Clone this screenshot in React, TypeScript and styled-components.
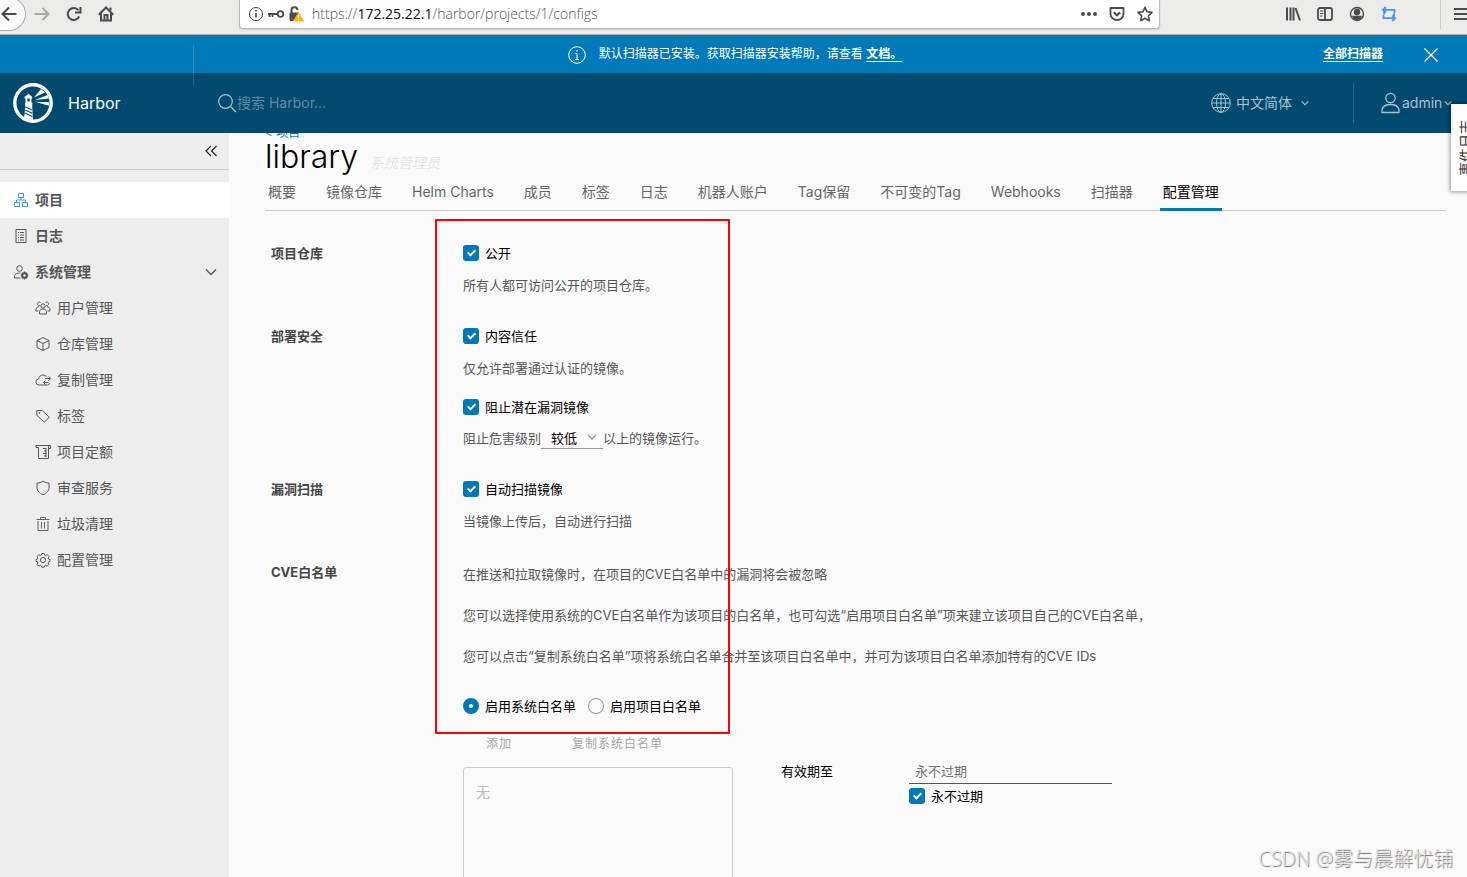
import React from 'react';
import styled, { createGlobalStyle } from 'styled-components';

const uiFont = `Inter, "Noto Sans CJK SC", sans-serif`;
const chromeFont = `"Open Sans", "Noto Sans CJK SC", sans-serif`;

const GlobalStyle = createGlobalStyle`
  *, *::before, *::after { box-sizing: border-box; }
  body { margin: 0; font-family: ${uiFont}; font-size: 13px; font-weight: 400; line-height: 24px; color: #000; background: #fafafa; }
  button, input, select, textarea { font: inherit; color: inherit; margin: 0; }
  button { border: 0; padding: 0; background: none; cursor: pointer; }
  p, h1, ul { margin: 0; padding: 0; font-weight: inherit; }
  ul { list-style: none; }
  svg { display: block; flex: none; }
`;

/* ---------- window ---------- */
const Window = styled.div`
  position: relative;
  display: flex;
  flex-direction: column;
  height: 100vh;
  overflow: hidden;
`;

const Toolbar = styled.div`
  display: flex;
  align-items: flex-start;
  height: 35px;
  flex: none;
  background: #ebebea;
  border-bottom: 1px solid #b4b4b3;
  color: #4a4a4f;
`;

const NavButtons = styled.div`
  display: flex;
  align-items: center;
  gap: 16px;
  width: 239px;
  height: 28px;
`;

const BackButton = styled.button`
  display: flex;
  align-items: center;
  justify-content: flex-end;
  width: 26px;
  height: 34px;
  margin-top: -1px;
  margin-right: -8px;
  padding-right: 8px;
  background: #fbfbfb;
  border: 1px solid #a9a9a9;
  border-left: 0;
  border-radius: 0 17px 17px 0;
`;

const IconButton = styled.button<{ $faded?: boolean }>`
  display: flex;
  opacity: ${(p) => (p.$faded ? 0.4 : 1)};
`;

const AddressBar = styled.div`
  display: flex;
  align-items: center;
  flex: 1;
  height: 29px;
  padding: 0 6px 0 8px;
  gap: 3px;
  background: #fff;
  border: 1px solid #b9b9b9;
  border-top: 0;
  border-radius: 0 0 4px 4px;
  box-shadow: 0 1px 2px rgba(0, 0, 0, 0.12);
`;

const Address = styled.div`
  flex: 1;
  margin-left: 5px;
  font: 300 14px/24px ${chromeFont};
  color: #555;
  white-space: nowrap;
  b { font-weight: 400; color: #0c0c0d; }
`;

const AddressActions = styled.div`
  display: flex;
  align-items: center;
  gap: 12px;
`;

const ToolbarTools = styled.div`
  display: flex;
  align-items: center;
  gap: 16px;
  width: 307px;
  height: 28px;
  padding-left: 125px;
`;

const ToolbarMenu = styled.div`
  display: flex;
  align-items: center;
  height: 30px;
  margin-left: auto;
  padding-left: 13px;
  border-left: 1px solid #cacaca;
`;

/* ---------- alert + header ---------- */
const Alert = styled.div`
  position: relative;
  display: grid;
  grid-template-columns: 1fr auto 1fr;
  align-items: center;
  height: 38px;
  flex: none;
  padding-top: 2px;
  background: #0079b8;
  color: #fff;
  font-size: 12px;
`;

const AlertRule = styled.i`
  position: absolute;
  left: 193px;
  top: 10px;
  width: 1px;
  height: 40px;
  background: rgba(255, 255, 255, 0.15);
`;

const AlertMessage = styled.p`
  grid-column: 2;
  display: flex;
  align-items: center;
  gap: 13px;
  padding-left: 3px;
`;

const AlertText = styled.span`
  line-height: 20px;
  padding-bottom: 2px;
`;

const AlertLink = styled.a`
  color: #fff;
  font-weight: 700;
  text-decoration: underline;
  text-decoration-thickness: 1px;
  text-underline-offset: 3px;
`;

const AlertActions = styled.div`
  display: flex;
  align-items: center;
  justify-content: flex-end;
  gap: 40px;
  padding-right: 28px;
`;

const Header = styled.header`
  display: flex;
  align-items: center;
  height: 60px;
  flex: none;
  background: #004a70;
  color: #a9c2cf;
  font-size: 14px;
`;

const Brand = styled.a`
  display: flex;
  align-items: center;
  gap: 15px;
  width: 218px;
  padding-left: 13px;
  color: #fff;
  font-size: 16px;
  text-decoration: none;
`;

const Search = styled.label`
  display: flex;
  align-items: center;
  flex: 1;
`;

const SearchInput = styled.input`
  flex: 1;
  border: 0;
  outline: 0;
  padding: 0;
  background: none;
  &::placeholder { color: #5f8ba3; opacity: 1; }
`;

const HeaderMenu = styled.button<{ $width: number; $gap: number }>`
  display: flex;
  align-items: center;
  gap: ${(p) => p.$gap}px;
  width: ${(p) => p.$width}px;
  height: 40px;
  white-space: nowrap;
`;

const HeaderCaret = styled.span<{ $space: number }>`
  margin-left: ${(p) => p.$space}px;
`;

const HeaderRule = styled.i`
  width: 1px;
  height: 40px;
  margin-right: 27px;
  background: rgba(255, 255, 255, 0.16);
`;

/* ---------- sidebar ---------- */
const Body = styled.div`
  display: flex;
  flex: 1;
  min-height: 0;
`;

const Sidebar = styled.nav`
  width: 229px;
  flex: none;
  background: #ededed;
  color: #565656;
`;

const CollapseRow = styled.div`
  display: flex;
  align-items: center;
  justify-content: flex-end;
  height: 37px;
  margin-bottom: 12px;
  padding-right: 12px;
  border-bottom: 1px solid #ccc;
  color: #222;
`;

const NavItem = styled.a<{ $active?: boolean; $child?: boolean }>`
  display: flex;
  align-items: center;
  gap: 6px;
  height: 36px;
  padding: 0 12px 0 ${(p) => (p.$child ? 35 : 13)}px;
  background: ${(p) => (p.$active ? '#fff' : 'none')};
  color: inherit;
  font-size: 14px;
  font-weight: ${(p) => (p.$child ? 400 : 700)};
  text-decoration: none;
  & > span { flex: 1; }
`;

/* ---------- main ---------- */
const Main = styled.main`
  position: relative;
  flex: 1;
  min-width: 0;
  overflow: hidden;
  padding: 0 21px 0 36px;
  background: #fafafa;
`;

const Crumb = styled.a`
  display: flex;
  align-items: flex-end;
  height: 6px;
  overflow: hidden;
  color: #0079b8;
  font-size: 12px;
  line-height: 12px;
  text-decoration: none;
`;

const TitleRow = styled.div`
  display: flex;
  align-items: baseline;
  gap: 12px;
  height: 40px;
`;

const Title = styled.h1`
  font-size: 32px;
  font-weight: 300;
  line-height: 36px;
`;

const Role = styled.span`
  color: #ddd;
  font-size: 14px;
  font-style: italic;
  font-weight: 300;
`;

const Tabs = styled.ul`
  display: flex;
  gap: 24px;
  height: 32px;
  border-bottom: 1px solid #ccc;
`;

const Tab = styled.a<{ $active?: boolean }>`
  display: block;
  height: 32px;
  padding: 0 3px;
  border-bottom: 3px solid ${(p) => (p.$active ? '#0079b8' : 'transparent')};
  color: ${(p) => (p.$active ? '#000' : '#666')};
  font-size: 14px;
  line-height: 26px;
  text-decoration: none;
  white-space: nowrap;
`;

const Form = styled.form`
  display: flex;
  flex-direction: column;
  gap: 27px;
  padding: 30px 0 0 6px;
`;

const FormRow = styled.section`
  display: grid;
  grid-template-columns: 192px 1fr;
`;

const RowLabel = styled.div`
  color: #454545;
  font-weight: 700;
`;

const Stack = styled.div<{ $gap: number }>`
  display: flex;
  flex-direction: column;
  gap: ${(p) => p.$gap}px;
`;

const CveNotes = styled(Stack)`
  padding-top: 2px;
`;

const Hint = styled.p`
  display: flex;
  color: #565656;
  white-space: nowrap;
`;

const Choice = styled.label`
  display: flex;
  align-items: center;
  gap: 6px;
  height: 24px;
`;

const Check = styled.input.attrs({ type: 'checkbox' })`
  appearance: none;
  display: flex;
  justify-content: center;
  width: 16px;
  height: 16px;
  background: #0079b8;
  border-radius: 3px;
  &::after {
    content: '';
    width: 5px;
    height: 8px;
    margin-top: 3px;
    border: solid #fff;
    border-width: 0 2px 2px 0;
    transform: rotate(45deg);
  }
`;

const Radio = styled.input.attrs({ type: 'radio' })`
  appearance: none;
  width: 16px;
  height: 16px;
  border: 1px solid #8c8c8c;
  border-radius: 50%;
  &:checked { border: 6px solid #0079b8; background: #fff; }
`;

const RadioGroup = styled.div`
  display: flex;
  gap: 12px;
  padding-top: 26px;
`;

const SelectWrap = styled.span`
  position: relative;
  width: 62px;
  height: 23px;
  border-bottom: 1px solid #999;
  color: #000;
  svg { position: absolute; right: 6px; top: 6px; pointer-events: none; color: #8c8c8c; }
`;

const Select = styled.select`
  appearance: none;
  width: 100%;
  height: 24px;
  padding: 0 0 0 10px;
  border: 0;
  background: none;
`;

const ListButtons = styled.div`
  display: flex;
  gap: 15px;
  padding-top: 14px;
`;

const ListButton = styled.button`
  padding: 0 22px 0 23px;
  color: #a6a6a6;
  font-size: 12px;
  letter-spacing: 1px;
`;

const ExpiryColumns = styled.div`
  display: flex;
  padding-top: 3px;
`;

const ListBox = styled.textarea`
  width: 270px;
  height: 200px;
  margin-top: 8px;
  padding: 12px;
  border: 1px solid #ccc;
  border-radius: 3px;
  background: none;
  resize: none;
  font-size: 14px;
  &::placeholder { color: #bbb; opacity: 1; }
`;

const ExpiryLabel = styled.label`
  width: 128px;
  margin-left: 48px;
`;

const ExpiryInput = styled.input`
  width: 203px;
  height: 25px;
  padding: 0 6px;
  border: 0;
  border-bottom: 1px solid #565656;
  background: none;
  &::placeholder { color: #737373; opacity: 1; }
`;

/* ---------- overlays ---------- */
const Highlight = styled.div`
  position: absolute;
  left: 206px;
  top: 86px;
  width: 295px;
  height: 515px;
  border: 2px solid #f00;
  border-radius: 1px;
  pointer-events: none;
`;

const EventTab = styled.button`
  position: absolute;
  top: 104px;
  right: -15px;
  width: 31px;
  height: 87px;
  background: #fff;
  box-shadow: 0 0 4px 1px rgba(0, 0, 0, 0.4);
  color: #333;
  font-size: 14px;
  span { display: block; margin-left: 3px; writing-mode: sideways-lr; }
`;

const Watermark = styled.div`
  position: absolute;
  right: 14px;
  bottom: 4px;
  color: #e4e4e4;
  font: 300 20px/28px ${chromeFont};
  text-shadow: 1px 1px 1px #707070;
`;

/* ---------- icons ---------- */
type IconProps = { size?: number; w?: number; sw?: number; box?: string; color?: string; children: React.ReactNode };
const Icon = ({ size = 16, w, sw = 1, box, color = 'currentColor', children }: IconProps) => (
  <svg width={w ?? size} height={size} viewBox={box ?? `0 0 ${w ?? size} ${size}`} fill="none" stroke={color} strokeWidth={sw} aria-hidden="true">
    {children}
  </svg>
);

const Chevron = ({ size = 8, sw = 1.6 }: { size?: number; sw?: number }) => (
  <Icon size={size} box="0 0 12 12" sw={sw}><path d="M1 3.5l5 5 5-5" /></Icon>
);

const LogoIcon = () => (
  <svg width="40" height="40" viewBox="0 0 40 40" aria-hidden="true">
    <circle cx="20" cy="20" r="18.2" fill="none" stroke="#fff" strokeWidth="3.4" />
    <path d="M11.5 15.2V14l4-3.2 3.7 3.2v1.2h-.7V20h1l-.3 3 .8 15.5-9-2.3L12.300 23l-.5-3h.7v-4.800z" fill="#fff" />
    <path d="M14.300 15.500h2.500v3h-2.500z" fill="#004a70" />
    <path d="M12.500 24l6.500 3M12.200 27l7 3.200M11.800 30l7.500 3.500" stroke="#004a70" strokeWidth="1.100" />
    <path d="M21 14.500L28 6l4 3.500zM22 17l12.500-5 1.500 3.500zM22 18.700l14 .5v3.500z" fill="#fff" />
  </svg>
);

const navIcons: Record<string, React.ReactNode> = {
  project: <Icon color="#3f9bcb"><path d="M5.500 1.500h5v4h-5zM1.500 10.500h5v4h-5zM9.500 10.500h5v4h-5zM8 5.500V8M3.500 10V8h9v2" /></Icon>,
  log: <Icon><path d="M3 1.500h10v13H3zM7 4.500h4M7 7h4M7 9.500h4M7 12h4M5 4.500h1M5 7h1M5 9.500h1M5 12h1" /></Icon>,
  admin: <Icon><circle cx="6.500" cy="4.500" r="2.800" /><path d="M7.500 14H1.500v-2.500C2.500 9.500 4.500 9 7.500 9" /><circle cx="11.500" cy="11.500" r="2.200" strokeWidth="2" /><path d="M11.500 7.500v1.700M11.500 13.800v1.700M7.800 11.500h1.500M13.700 11.500h1.600M8.900 8.900l1 1M13.100 13.100l1 1M14.100 8.900l-1 1M9.900 13.100l-1 1" strokeWidth="1.500" /></Icon>,
  users: <Icon><circle cx="8" cy="6" r="2.200" /><path d="M4.500 14v-2.500C5 9.500 6.500 9 8 9s3 .5 3.500 2.500V14zM4.800 5.500A1.800 1.800 0 1 1 5.500 2.500M11.200 5.500a1.800 1.800 0 1 0-.7-3M3.500 11H1V9c.3-1.500 1.500-2.200 3-2.300M12.500 11H15V9c-.3-1.500-1.500-2.200-3-2.300" /></Icon>,
  registry: <Icon><path d="M8 1.500l6 3v7l-6 3-6-3v-7zM2 4.500l6 3 6-3M8 7.500v7" /></Icon>,
  replicate: <Icon><path d="M12.500 13H4a3 3 0 0 1-.3-6C4 4.500 5.700 3 8 3c1.700 0 3 .8 3.600 2.200M10 6.500h5.500M13.800 4.500l2 2-2 2M13.500 10.500H8.500M10.500 8.500l-2 2 2 2M12.500 13c1 0 2-.8 2.200-2" /></Icon>,
  tag: <Icon><path d="M1.800 2.500h5.500l7 6.700-5 5-7.500-7z" /><circle cx="4.500" cy="5" r=".5" /></Icon>,
  quota: <Icon><path d="M1 1.500h14.500v3h-2M3.500 3.500v11H13.500V1.500M1 1.500v2h2.500M11 4.500H8M11 7H9M11 9.500H8M11 12H9M11 4v9" /></Icon>,
  shield: <Icon><path d="M8 1.200c2 1.300 4 1.800 6 1.900v4.400c0 3.300-2.500 5.800-6 7.300-3.500-1.500-6-4-6-7.300V3.100c2-.1 4-.6 6-1.900z" /></Icon>,
  trash: <Icon><path d="M1.500 3.500h13M3 5v9.500h10V5M5.500 3.500v-2h5v2M6.500 6v6.500M9.500 6v6.500" strokeWidth=".9" /></Icon>,
  gear: <Icon><circle cx="8" cy="8" r="2.600" /><path d="M6.700 1.500h2.600l.4 1.700 1 .4 1.500-.9 1.800 1.800-.9 1.500.4 1 1.500.4v2l-1.500.5-.4 1 .8 1.500-1.800 1.800-1.500-.9-1 .4-.4 1.500H6.700l-.4-1.500-1-.4-1.500.9L2 12.400l.9-1.500-.4-1L1 9.400v-2L2.500 7l.4-1L2 4.500l1.800-1.800 1.500.9 1-.4z" /></Icon>,
};

const topNav = [
  { icon: 'project', text: '项目', active: true },
  { icon: 'log', text: '日志' },
  { icon: 'admin', text: '系统管理', open: true },
];
const childNav = [
  ['users', '用户管理'], ['registry', '仓库管理'], ['replicate', '复制管理'], ['tag', '标签'],
  ['quota', '项目定额'], ['shield', '审查服务'], ['trash', '垃圾清理'], ['gear', '配置管理'],
];
const tabs = ['概要', '镜像仓库', 'Helm Charts', '成员', '标签', '日志', '机器人账户', 'Tag保留', '不可变的Tag', 'Webhooks', '扫描器', '配置管理'];

const BrowserBar = () => (
  <Toolbar>
    <NavButtons>
      <BackButton aria-label="后退"><Icon sw={2}><path d="M15.500 8H1.500M8 1.500L1.500 8 8 14.500" /></Icon></BackButton>
      <IconButton aria-label="前进" $faded><Icon sw={2}><path d="M.5 8h14M8.500 2l6 6-6 6" /></Icon></IconButton>
      <IconButton aria-label="刷新"><Icon sw={2}><path d="M13.200 10.500A6 6 0 1 1 12.500 4.200M14.500 1v5.500H9" /></Icon></IconButton>
      <IconButton aria-label="主页"><Icon sw={2}><path d="M.8 8.700L8 1.500l7.200 7.200M3 7v7.500h10V7" /><path d="M6.500 14V9h3v5M12.500 1.500v3" /></Icon></IconButton>
    </NavButtons>
    <AddressBar>
      <Icon><circle cx="8" cy="8" r="6.500" /><path d="M8 7v4.500M8 4v1.500" strokeWidth="1.600" /></Icon>
      <Icon w={18} size={16} sw={1.800}><circle cx="13.500" cy="8" r="2.800" /><path d="M10.500 8H1M2.500 8v3M5.500 8v3" /></Icon>
      <Icon w={16} size={16}>
        <path d="M3.500 7V4.500a3 3 0 0 1 6-.5" strokeWidth="2" />
        <path d="M2 7h8v7.500H2z" fill="#4a4a4f" />
        <path d="M10.500 6.500L15.500 15h-10z" fill="#ffb200" stroke="#ffb200" strokeLinejoin="round" />
        <path d="M10.500 9v3M10.500 13v1.200" stroke="#fff" strokeWidth="1.200" />
      </Icon>
      <Address>https://<b>172.25.22.1</b>/harbor/projects/1/configs</Address>
      <AddressActions>
        <IconButton aria-label="页面操作"><Icon><path d="M2 8h0M8 8h0M14 8h0" strokeWidth="4" strokeLinecap="round" /></Icon></IconButton>
        <IconButton aria-label="保存"><Icon sw={1.800}><path d="M1.500 2h13v6a6.500 6 0 0 1-13 0z" strokeLinejoin="round" /><path d="M4.800 6.200L8 9.300l3.200-3.100" strokeWidth="2" /></Icon></IconButton>
        <IconButton aria-label="收藏"><Icon sw={1.600}><path d="M8 1.300l2.100 4.500 4.900.6-3.600 3.400.9 4.900L8 12.300l-4.300 2.400.9-4.900L1 6.400l4.900-.6z" strokeLinejoin="round" /></Icon></IconButton>
      </AddressActions>
    </AddressBar>
    <ToolbarTools>
      <IconButton aria-label="书库"><Icon sw={2}><path d="M2 1.500v13M5.500 1.500v13M8.500 1.500v13M10.500 2l4.500 12.500" /></Icon></IconButton>
      <IconButton aria-label="侧栏"><Icon sw={1.800}><rect x="1" y="2" width="14" height="12" rx="2" /><path d="M8 2v12" /><path d="M3 5h3.500M3 7.500h3.500M3 10h2.500" strokeWidth="1" /></Icon></IconButton>
      <IconButton aria-label="账户"><Icon sw={1.400}><circle cx="8" cy="8" r="6.500" /><circle cx="8" cy="6" r="2.500" fill="#4a4a4f" /><path d="M4 10.500h8c-.6 2-2 2.800-4 2.800s-3.400-.8-4-2.800z" fill="#4a4a4f" /></Icon></IconButton>
      <IconButton aria-label="同步"><Icon sw={1.800} color="#4a90f5"><path d="M3 8.500V3.800h10.500v3.500M4.800 1L2 3.800l2.800 2.700M13 7.500v4.700H2.500V9M11.200 9.500l2.800 2.700-2.800 2.800" /></Icon></IconButton>
      <ToolbarMenu><IconButton aria-label="菜单"><Icon w={13} size={16} sw={2}><path d="M0 3h13M0 8h13M0 13h13" /></Icon></IconButton></ToolbarMenu>
    </ToolbarTools>
  </Toolbar>
);

const App = () => (
  <>
    <GlobalStyle />
    <Window>
      <BrowserBar />
      <Alert role="alert">
        <AlertRule />
        <AlertMessage>
          <Icon size={18}><circle cx="9" cy="9" r="8.300" /><path d="M9 4v1.700M7.300 7.500H9v6M7 13.500h4" /></Icon>
          <AlertText>默认扫描器已安装。获取扫描器安装帮助，请查看 <AlertLink href="#docs">文档。</AlertLink></AlertText>
        </AlertMessage>
        <AlertActions>
          <AlertText><AlertLink href="#scanners">全部扫描器</AlertLink></AlertText>
          <IconButton aria-label="关闭"><Icon sw={1.300}><path d="M1.500 1.500l13 13M14.500 1.500l-13 13" /></Icon></IconButton>
        </AlertActions>
      </Alert>
      <Header>
        <Brand href="#home"><LogoIcon />Harbor</Brand>
        <Search>
          <Icon w={19} size={20} sw={1.200}><circle cx="7.500" cy="8.500" r="6.800" /><path d="M12.500 13.500l5.500 5.500" /></Icon>
          <SearchInput aria-label="搜索" placeholder="搜索 Harbor..." />
        </Search>
        <HeaderMenu $width={142} $gap={5}>
          <Icon size={20}><circle cx="10" cy="10" r="9.300" /><ellipse cx="10" cy="10" rx="4.500" ry="9.300" /><path d="M10 .7v18.600M.7 10h18.600M2.200 5.500h15.600M2.200 14.500h15.600" /></Icon>
          中文简体
          <HeaderCaret $space={4}><Chevron /></HeaderCaret>
        </HeaderMenu>
        <HeaderRule />
        <HeaderMenu $width={86} $gap={2}>
          <Icon w={19} size={22} sw={1.300}><circle cx="9.500" cy="6" r="4.700" /><path d="M1 20.500v-3c1-3.500 4.500-5 8.500-5s7.500 1.500 8.500 5v3z" strokeLinejoin="round" /></Icon>
          admin
          <HeaderCaret $space={0}><Chevron /></HeaderCaret>
        </HeaderMenu>
      </Header>
      <Body>
        <Sidebar>
          <CollapseRow><IconButton aria-label="折叠"><Icon w={12} size={12} sw={1.200}><path d="M6 1L1 6l5 5M11.500 1l-5 5 5 5" /></Icon></IconButton></CollapseRow>
          {topNav.map((n) => (
            <NavItem key={n.text} href="#nav" $active={n.active}>
              {navIcons[n.icon]}<span>{n.text}</span>{n.open && <Chevron size={12} sw={1.400} />}
            </NavItem>
          ))}
          {childNav.map(([icon, text]) => (
            <NavItem key={text} href="#nav" $child>{navIcons[icon]}<span>{text}</span></NavItem>
          ))}
        </Sidebar>
        <Main>
          <Crumb href="#projects">&lt; 项目</Crumb>
          <TitleRow><Title>library</Title><Role>系统管理员</Role></TitleRow>
          <Tabs>
            {tabs.map((t) => <li key={t}><Tab href="#tab" $active={t === '配置管理'}>{t}</Tab></li>)}
          </Tabs>
          <Form>
            <FormRow>
              <RowLabel>项目仓库</RowLabel>
              <Stack $gap={8}>
                <Choice><Check defaultChecked />公开</Choice>
                <Hint>所有人都可访问公开的项目仓库。</Hint>
              </Stack>
            </FormRow>
            <FormRow>
              <RowLabel>部署安全</RowLabel>
              <Stack $gap={15}>
                <Stack $gap={8}>
                  <Choice><Check defaultChecked />内容信任</Choice>
                  <Hint>仅允许部署通过认证的镜像。</Hint>
                </Stack>
                <Stack $gap={7}>
                  <Choice><Check defaultChecked />阻止潜在漏洞镜像</Choice>
                  <Hint>
                    阻止危害级别
                    <SelectWrap>
                      <Select aria-label="危害级别" defaultValue="low"><option value="low">较低</option></Select>
                      <Chevron size={10} sw={1.400} />
                    </SelectWrap>
                    以上的镜像运行。
                  </Hint>
                </Stack>
              </Stack>
            </FormRow>
            <FormRow>
              <RowLabel>漏洞扫描</RowLabel>
              <Stack $gap={8}>
                <Choice><Check defaultChecked />自动扫描镜像</Choice>
                <Hint>当镜像上传后，自动进行扫描</Hint>
              </Stack>
            </FormRow>
            <FormRow>
              <RowLabel>CVE白名单</RowLabel>
              <div>
                <CveNotes $gap={17}>
                  <Hint>在推送和拉取镜像时，在项目的CVE白名单中的漏洞将会被忽略</Hint>
                  <Hint>您可以选择使用系统的CVE白名单作为该项目的白名单，也可勾选“启用项目白名单”项来建立该项目自己的CVE白名单，</Hint>
                  <Hint>您可以点击“复制系统白名单”项将系统白名单合并至该项目白名单中，并可为该项目白名单添加特有的CVE IDs</Hint>
                </CveNotes>
                <RadioGroup>
                  <Choice><Radio name="list" defaultChecked />启用系统白名单</Choice>
                  <Choice><Radio name="list" />启用项目白名单</Choice>
                </RadioGroup>
                <ListButtons>
                  <ListButton type="button" disabled>添加</ListButton>
                  <ListButton type="button" disabled>复制系统白名单</ListButton>
                </ListButtons>
                <ExpiryColumns>
                  <ListBox aria-label="白名单" placeholder="无" disabled />
                  <ExpiryLabel htmlFor="expires">有效期至</ExpiryLabel>
                  <div>
                    <ExpiryInput id="expires" placeholder="永不过期" />
                    <Choice><Check defaultChecked />永不过期</Choice>
                  </div>
                </ExpiryColumns>
              </div>
            </FormRow>
          </Form>
          <Highlight />
        </Main>
      </Body>
      <EventTab><span>事件日志</span></EventTab>
      <Watermark>CSDN @雾与晨解忧铺</Watermark>
    </Window>
  </>
);

export default App;
